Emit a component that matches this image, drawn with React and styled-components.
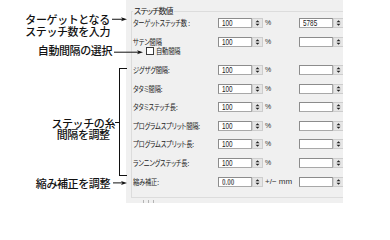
import React from "react";
import styled, { createGlobalStyle } from "styled-components";

const Global = createGlobalStyle`
  html, body { margin: 0; padding: 0; background: #fff; }
  body { font-family: "Noto Sans CJK JP", "Noto Sans", sans-serif; }
`;

const Page = styled.div`
  display: flex;
  width: 390px;
  height: 224px;
  background: #fff;
  overflow: hidden;
`;

const Notes = styled.div`
  position: relative;
  z-index: 1;
  flex: none;
  width: 126px;
  display: flex;
  flex-direction: column;
  font-family: "Noto Sans CJK JP", sans-serif;
  font-size: 11px;
  font-weight: 500;
  letter-spacing: -0.4px;
  color: #111;
`;

const Callout = styled.div`
  display: flex;
  justify-content: flex-end;
  align-items: flex-start;
  margin-top: ${(p) => p.$mt}px;
  margin-right: ${(p) => -p.$over}px;
`;

const CalloutText = styled.div`
  line-height: ${(p) => p.$lh || 12.5}px;
  text-align: ${(p) => p.$align || "right"};
  white-space: nowrap;
  margin-right: ${(p) => p.$gap}px;
`;

const ArrowSvg = styled.svg`
  flex: none;
  display: block;
`;

function Arrow({ w, h = 12.5, y }) {
  const my = y ?? h / 2;
  return (
    <ArrowSvg width={w} height={h} viewBox={`0 0 ${w} ${h}`}>
      <line x1="0" y1={my} x2={w - 3} y2={my} stroke="#111" strokeWidth="1" />
      <path
        d={`M${w - 6} ${my - 2} L${w} ${my} L${w - 6} ${my + 2} L${w - 4.5} ${my} Z`}
        fill="#111"
      />
    </ArrowSvg>
  );
}

const BracketRow = styled.div`
  display: flex;
  justify-content: flex-end;
  align-items: flex-start;
  margin-top: ${(p) => p.$mt}px;
  margin-right: -1px;
`;

const BracketText = styled.div`
  margin-top: 50px;
  line-height: 11px;
  text-align: center;
  white-space: nowrap;
`;

const Tick = styled.span`
  display: block;
  width: 4px;
  height: 1px;
  background: #111;
  margin-top: 54px;
`;

const Bracket = styled.div`
  box-sizing: border-box;
  width: 8px;
  height: 108px;
  border: 1px solid #111;
  border-right: none;
`;

const Panel = styled.div`
  flex: none;
  box-sizing: border-box;
  width: 217px;
  height: 203px;
  padding-left: 5px;
  background: #f0f0f0;
  overflow: hidden;
`;

const Group = styled.fieldset`
  box-sizing: border-box;
  width: 240px;
  height: 192px;
  margin: 6px 0 0 0;
  padding: 0 0 0 1px;
  border: 1px solid #dcdcdc;
  min-width: 0;
`;

const GroupTitle = styled.legend`
  padding: 0 1px;
  font-size: 8px;
  line-height: 10px;
  color: #222;
  font-feature-settings: "palt";
  letter-spacing: -0.9px;
`;

const Fields = styled.div`
  display: flex;
  flex-direction: column;
  padding-top: 2px;
`;

const FieldRow = styled.div`
  display: grid;
  grid-template-columns: 85px 34px 11px 36px 34px 11px;
  align-items: center;
  height: 10px;
  margin-top: ${(p) => p.$mt || 0}px;
`;

const Label = styled.span`
  display: inline-block;
  font-size: 8px;
  line-height: 10px;
  color: #1c1c1c;
  white-space: nowrap;
  font-feature-settings: "palt";
  letter-spacing: -0.2px;
  transform: scaleX(0.78);
  transform-origin: left center;
`;

const Input = styled.div`
  box-sizing: border-box;
  height: 10px;
  background: #fff;
  border: 1px solid #a8a8a8;
  border-top-color: #8c8c8c;
  border-left-color: #8c8c8c;
  display: flex;
  align-items: center;
  padding-left: 3px;
  overflow: hidden;
`;

const Value = styled.span`
  display: inline-block;
  font-family: "Liberation Sans", Arial, sans-serif;
  font-size: 8.5px;
  line-height: 8px;
  color: ${(p) => (p.$dim ? "#6a6a6a" : "#222")};
  font-weight: ${(p) => (p.$dim ? 700 : 400)};
  transform: scaleX(0.75);
  transform-origin: left center;
`;

const Spin = styled.div`
  box-sizing: border-box;
  height: 10px;
  background: #e6e6e6;
  border: 1px solid #cdcdcd;
  display: flex;
  align-items: center;
  justify-content: center;
`;

const Unit = styled.span`
  padding-left: 2px;
  font-family: "Liberation Sans", Arial, sans-serif;
  font-size: ${(p) => (p.$wide ? 8 : 7)}px;
  line-height: 10px;
  color: #333;
  white-space: nowrap;
`;

const CheckRow = styled.div`
  display: flex;
  align-items: center;
  height: 8px;
`;

const Box = styled.span`
  box-sizing: border-box;
  flex: none;
  width: 8px;
  height: 8px;
  margin-left: 13px;
  border: 1px solid #3a3a3a;
  background: #fff;
`;

const CheckText = styled(Label)`
  margin-left: 2px;
`;

const Marks = styled.div`
  display: flex;
  gap: 4px;
  margin: 2px 0 0 12px;
`;

const Mark = styled.span`
  width: 1px;
  height: 3px;
  background: #b5b5b5;
`;

function SpinIcon() {
  return (
    <svg width="7" height="8" viewBox="0 0 7 8">
      <path d="M1.5 3.3 L3.5 1.2 L5.5 3.3 Z" fill="#222" />
      <path d="M1.5 4.7 L3.5 6.8 L5.5 4.7 Z" fill="#222" />
    </svg>
  );
}

function Field({ label, value, unit, second, mt, dim }) {
  return (
    <FieldRow $mt={mt}>
      <Label>{label}</Label>
      <Input>
        <Value $dim={dim}>{value}</Value>
      </Input>
      <Spin>
        <SpinIcon />
      </Spin>
      <Unit $wide={unit !== "%"}>{unit}</Unit>
      <Input>
        <Value>{second}</Value>
      </Input>
      <Spin>
        <SpinIcon />
      </Spin>
    </FieldRow>
  );
}

const rows = [
  { label: "ジグザグ間隔:", mt: 10 },
  { label: "タタミ間隔:", mt: 8.6 },
  { label: "タタミステッチ長:", mt: 8.6 },
  { label: "プログラムスプリット間隔:", mt: 8.7 },
  { label: "プログラムスプリット長:", mt: 8.6 },
  { label: "ランニングステッチ長:", mt: 8.6 },
];

export default function App() {
  return (
    <>
      <Global />
      <Page>
        <Notes>
          <Callout $mt={12.75} $over={1}>
            <CalloutText $gap={2} $align="center">
              ターゲットとなる
              <br />
              ステッチ数を入力
            </CalloutText>
            <Arrow w={15} />
          </Callout>
          <Callout $mt={6} $over={17}>
            <CalloutText $gap={2}>自動間隔の選択</CalloutText>
            <Arrow w={29} y={8.2} />
          </Callout>
          <BracketRow $mt={11.25}>
            <BracketText>
              ステッチの糸
              <br />
              間隔を調整
            </BracketText>
            <Tick />
            <Bracket />
          </BracketRow>
          <Callout $mt={1.25} $over={1}>
            <CalloutText $gap={3}>縮み補正を調整</CalloutText>
            <Arrow w={14} y={5.9} />
          </Callout>
        </Notes>
        <Panel>
          <Group>
            <GroupTitle>ステッチ数値</GroupTitle>
            <Fields>
              <Field label="ターゲットステッチ数 :" value="100" unit="%" second="5785" />
              <Field label="サテン間隔" value="100" unit="%" second="" mt={9} />
              <CheckRow>
                <Box />
                <CheckText>自動間隔</CheckText>
              </CheckRow>
              {rows.map((r) => (
                <Field key={r.label} label={r.label} value="100" unit="%" second="" mt={r.mt} />
              ))}
              <Field label="縮み補正:" value="0.00" unit="+/− mm" second="" mt={8.6} dim />
            </Fields>
          </Group>
          <Marks>
            <Mark />
            <Mark />
            <Mark />
          </Marks>
        </Panel>
      </Page>
    </>
  );
}
